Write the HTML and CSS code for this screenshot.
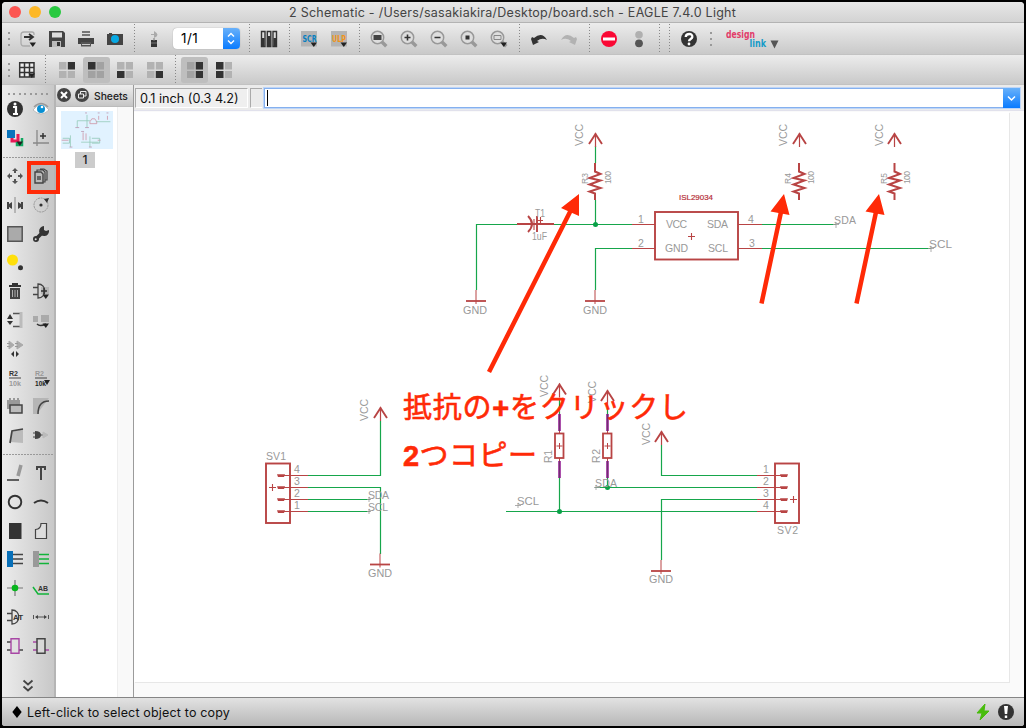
FILE: index.html
```html
<!DOCTYPE html>
<html lang="ja">
<head>
<meta charset="utf-8">
<title>2 Schematic - EAGLE 7.4.0 Light</title>
<link rel="stylesheet" href="styles.css">
</head>
<body>
<svg class="defs" aria-hidden="true">
  <defs>
    <g id="lens"><path d="M3 3 7.300 7.300" stroke="#999" stroke-width="3.400"/><circle cx="-1.500" cy="-1.500" r="6.200" fill="#dedede" stroke="#999" stroke-width="1.500"/></g>
    <path id="drop" d="M1.500 3.500h6.500L4.800 8z" fill="#222"/>
    <g id="supply" fill="none" stroke="#b84444"><path d="M0 0V14" stroke-width="1.200"/><path d="M-6.500 11 0 1 6.500 11" stroke-width="1.900"/></g>
    <g id="ground" stroke="#b84444"><path d="M0-10V4" stroke-width="1"/><path d="M-10 1H10" stroke-width="1.800"/></g>
    <path id="zigzag" d="M0 0V8.500L5.500 11-5.500 15 5.500 17.500-5.500 21.500 5.500 25-5.500 28.500 0 30.500V37" fill="none" stroke="#b84444" stroke-width="2"/>
    <g id="pad"><path d="M-4-1.300H4L3 1.500H-3z" fill="#b84444"/></g>
    <g id="resistor"><path d="M0 0V17M0 47V64" stroke="#952395" stroke-width="2.600"/><path d="M0 0V17M0 47V64" stroke="#673268" stroke-width=".8"/><path d="M0 17V20M0 44V47" stroke="#b84444"/><rect x="-4.500" y="19.500" width="8.500" height="24.500" fill="#fff" stroke="#b84444" stroke-width="1.800"/><path d="M-3 32H3M0 29V35" stroke="#b84444"/></g>
    <g id="gate" fill="none" stroke="#444" stroke-width="1.300"><path d="M-8-3.500h5M-8 3.500h5M-3-7v14C6 7 6-7-3-7z"/></g>
  </defs>
</svg>
<div class="window">
  <header class="titlebar">
    <div class="lights"><i class="close"></i><i class="min"></i><i class="max"></i></div>
    <h1>2 Schematic - /Users/sasakiakira/Desktop/board.sch - EAGLE 7.4.0 Light</h1>
  </header>

  <nav class="toolbar main-tools">
    <span class="grip"></span>
    <div class="group file">
      <b><svg viewBox="-8 -8 16 16"><path d="M6-4V-5Q6-7 4-7H-4Q-7-7-7-4V4Q-7 7-4 7H2" fill="none" stroke="#aaa" stroke-width="1.300"/><path d="M-4-2H4M1-5 5-2 1 1" fill="none" stroke="#333" stroke-width="1.800"/><use href="#drop"/></svg></b>
      <b><svg viewBox="-8 -8 16 16"><path d="M-8-8H6L8-6V8H-8z" fill="#444"/><path d="M-5-6.500h10v5h-10z" fill="#ddd"/><path d="M-5 2h9v6h-9z" fill="#bbb"/><path d="M0 3h3v4H0z" fill="#333"/></svg></b>
      <b><svg viewBox="-8 -8 16 16"><path d="M-4-7h8M-4-4h8" stroke="#777" stroke-width="2"/><path d="M-8-1H8V5H5V3H-5V5H-8z" fill="#444"/><path d="M-5 3H5V7.500H-5z" fill="#555"/><path d="M-4 5.500h8" stroke="#ccc"/></svg></b>
      <b><svg viewBox="-8 -8 16 16"><path d="M-8-5H-6V-6H-3V-5H8V6H-8z" fill="#444"/><circle r="4" fill="#08a9e4"/></svg></b>
    </div>
    <span class="sep"></span>
    <b><svg viewBox="-8 -8 16 16"><path d="M-3-5H0V-8Q7-4 0-1V-4H-3z" fill="#aaa"/><path d="M-3 1H3V8H-3z" fill="#333"/><path d="M0-1V2M-3 4H3" stroke="#777"/></svg></b>
    <div class="combo"><span>1/1</span><i><svg viewBox="0 0 16 21"><path d="M5 8.500 8 5.500 11 8.500M5 12.500 8 15.500 11 12.500" fill="none" stroke="#fff" stroke-width="1.400"/></svg></i></div>
    <span class="sep"></span>
    <b><svg viewBox="-8 -8 16 16"><g fill="#ddd" stroke="#333" stroke-width="1.400"><path d="M-7.500-7.500h3.500v15h-3.500zM-1.700-7.500h3.500v15h-3.500zM4-7.500h3.500v15H4z"/><path d="M-6-1V7M0-3V7M6-1V7" stroke-width="3"/></g></svg></b>
    <span class="sep"></span>
    <b><svg viewBox="-8 -8 16 16"><path d="M-8-8H8V7.500H-8z" fill="#b4b4b4"/><text class="tag" x="-6.500" y="2.500" fill="#087fc0" textLength="14" lengthAdjust="spacingAndGlyphs">SCR</text><use href="#drop"/></svg></b>
    <b><svg viewBox="-8 -8 16 16"><path d="M-8-8H8V7.500H-8z" fill="#b4b4b4"/><text class="tag" x="-7" y="2.500" fill="#f29418" textLength="14" lengthAdjust="spacingAndGlyphs">ULP</text><use href="#drop"/></svg></b>
    <span class="sep"></span>
    <b><svg viewBox="-8 -8 16 16"><use href="#lens"/><path d="M-5.500-4H2.500V1H-5.500z" fill="#444"/></svg></b>
    <b><svg viewBox="-8 -8 16 16"><use href="#lens"/><path d="M-4.500-1.500h6M-1.500-4.500v6" stroke="#333" stroke-width="1.600"/></svg></b>
    <b><svg viewBox="-8 -8 16 16"><use href="#lens"/><path d="M-4.500-1.500h6" stroke="#333" stroke-width="1.600"/></svg></b>
    <b><svg viewBox="-8 -8 16 16"><use href="#lens"/><path d="M-3.500-3.500h4v4h-4z" fill="#333"/></svg></b>
    <b><svg viewBox="-8 -8 16 16"><use href="#lens"/><path d="M-5-3.500h7v4h-7z" fill="#ddd" stroke="#888"/><use href="#drop"/></svg></b>
    <span class="sep"></span>
    <b><svg viewBox="-8 -8 16 16"><path d="M-8 0-6 6 0 3-2 2Q3-2 8 1 3-8-5-1L-7-2z" fill="#333"/></svg></b>
    <b><svg viewBox="-8 -8 16 16"><path d="M8 0 6 6 0 3 2 2Q-3-2-8 1-3-8 5-1L7-2z" fill="#b2b2b2"/></svg></b>
    <span class="sep"></span>
    <b><svg viewBox="-8 -8 16 16"><circle r="8" fill="#fa0834"/><path d="M-6 0H6" stroke="#fff" stroke-width="3"/></svg></b>
    <b><svg viewBox="-8 -8 16 16"><circle cy="-4.300" r="3.800" fill="#b0b0b0"/><circle cy="4.300" r="3.900" fill="#555"/></svg></b>
    <span class="sep"></span><span class="sep"></span>
    <b><svg viewBox="-8 -8 16 16"><circle r="8" fill="#333"/><path d="M-3.300-2C-3-6 4-6 3.300-2 3 0 0 0 0 2.300" fill="none" stroke="#fff" stroke-width="2.300"/><circle cy="5" r="1.400" fill="#fff"/></svg></b>
    <span class="grip"></span>
    <svg class="designlink" viewBox="0 0 54 26"><text x="0" y="12" fill="#e23c6a" textLength="29" lengthAdjust="spacingAndGlyphs">design</text><text x="23.500" y="20.500" fill="#159bc8" textLength="16.500" lengthAdjust="spacingAndGlyphs">link</text><path d="M44.500 14.500h8L48.500 22.500z" fill="#555"/></svg>
  </nav>

  <nav class="toolbar layout-tools">
    <span class="grip"></span>
    <b class="first"><svg viewBox="-8 -8 16 16"><path d="M-7.300-7.300H7V7H-7.300zM-2.500-7V7M2.500-7V7M-7-2.500H7M-7 2.500H7" fill="#eee" stroke="#333" stroke-width="1.500"/><use href="#drop"/></svg></b>
    <span class="sep"></span>
    <b><svg viewBox="-8 -8 16 16"><path d="M-8-8h7.500v7.500H-8zM-8 1h7.500v7H-8zM.8 1H8v7H.8z" fill="#b2b2b2"/><path d="M.8-8H8v7.500H.8z" fill="#333"/></svg></b>
    <b class="on"><svg viewBox="-8 -8 16 16"><path d="M.8-8H8v7.500H.8zM-8 1h7.500v7H-8zM.8 1H8v7H.8z" fill="#a2a2a2"/><path d="M-8-8h7.500v7.500H-8z" fill="#333"/></svg></b>
    <b><svg viewBox="-8 -8 16 16"><path d="M-8-8h7.500v7.500H-8zM.8-8H8v7.500H.8zM.8 1H8v7H.8z" fill="#b2b2b2"/><path d="M-8 1h7.500v7H-8z" fill="#333"/></svg></b>
    <b><svg viewBox="-8 -8 16 16"><path d="M-8-8h7.500v7.500H-8zM.8-8H8v7.500H.8zM-8 1h7.500v7H-8z" fill="#b2b2b2"/><path d="M.8 1H8v7H.8z" fill="#333"/></svg></b>
    <span class="sep"></span>
    <b class="on"><svg viewBox="-8 -8 16 16"><path d="M-8-8h7.500v7.500H-8zM-8 1h7.500v7H-8z" fill="#a2a2a2"/><path d="M.8-8H8v7.500H.8zM.8 1H8v7H.8z" fill="#333"/></svg></b>
    <b><svg viewBox="-8 -8 16 16"><path d="M.8-8H8v7.500H.8zM.8 1H8v7H.8z" fill="#b2b2b2"/><path d="M-8-8h7.500v7.500H-8zM-8 1h7.500v7H-8z" fill="#333"/></svg></b>
  </nav>

  <main class="work">
    <aside class="palette">
      <span class="dots"></span>
      <div class="tools">
        <b><svg viewBox="-8 -8 16 16"><circle r="8" fill="#333"/><path d="M-2-2H1V4M-2 5H3" fill="none" stroke="#fff" stroke-width="2.200"/><circle cx="0" cy="-5" r="1.500" fill="#fff"/></svg></b>
        <b><svg viewBox="-8 -8 16 16"><path d="M-8 1Q0-10 8 1 0 9-8 1z" fill="#fff" stroke="#bbb"/><circle cx="0" cy="0" r="4" fill="#078fd3"/><circle cx="1" cy="-2" r="1.300" fill="#fff"/><path d="M-7-2Q0-9 7-2" fill="none" stroke="#999" stroke-width="1.500"/></svg></b>
        <b><svg viewBox="-8 -8 16 16"><path d="M-8-8H0V0H-8z" fill="#0874bd"/><path d="M-3 0V3H3V-4" fill="none" stroke="#e61b57" stroke-width="3"/><path d="M2 4V7H7V0" fill="none" stroke="#12a860" stroke-width="2.500"/><use href="#drop"/></svg></b>
        <b><svg viewBox="-8 -8 16 16"><path d="M-4-8V8M-8 5H8" stroke="#888" stroke-width="1.300"/><path d="M-1-2H5M2-5V1" stroke="#333" stroke-width="1.500"/></svg></b>
      </div>
      <span class="rule"></span>
      <div class="tools">
        <b><svg viewBox="-8 -8 16 16"><path d="M0-8 3-5H1V-3H-1V-5H-3zM0 8 3 5H1V3H-1V5H-3zM-8 0-5-3V-1H-3V1H-5V3zM8 0 5-3V-1H3V1H5V3z" fill="#555"/></svg></b>
        <b class="picked"><svg viewBox="-8 -8 16 16"><path d="M-6-4H0L2-2V7H-6z" fill="none" stroke="#444" stroke-width="1.400"/><path d="M-4-4V-6H2L4-4V6H2M-1-7H3L6-5V4H4" fill="none" stroke="#444" stroke-width="1.200"/><path d="M-4 0H0V4H-4z" fill="#666"/></svg></b>
        <b><svg viewBox="-8 -8 16 16"><path d="M0-8V8" stroke="#888"/><path d="M-8-3H-6V-1L-3-3V4L-6 2V4H-8zM8-3H6V-1L3-3V4L6 2V4H8z" fill="#444"/></svg></b>
        <b><svg viewBox="-8 -8 16 16"><circle r="7" fill="none" stroke="#999" stroke-dasharray="2 .7"/><circle r="1.600" fill="#333"/><path d="M3-6 8-7 6-2z" fill="#333"/></svg></b>
        <b><svg viewBox="-8 -8 16 16"><path d="M-7.200-7.200H7.200V7.200H-7.200z" fill="#aaa" stroke="#555" stroke-width="1.500"/></svg></b>
        <b><svg viewBox="-8 -8 16 16"><path d="M-5 5 3-3" stroke="#333" stroke-width="3.500"/><path d="M8-4A5 5 0 1 1 3-8V-4L5-3z" fill="#333"/><circle cx="-5" cy="5" r="3" fill="#333"/><circle cx="-5.300" cy="5.300" r="1" fill="#ddd"/></svg></b>
        <b><svg viewBox="-8 -8 16 16"><circle cx="-2.500" cy="-2" r="5.500" fill="#ffdf0b"/><circle cx="5.500" cy="5.800" r="2.500" fill="#333"/></svg></b><b></b>
        <b><svg viewBox="-8 -8 16 16"><path d="M-6-5H6M-3-7H3" stroke="#333" stroke-width="1.800"/><path d="M-5-3H5V8H-5z" fill="#444"/><path d="M-2.500-1V6M0-1V6M2.500-1V6" stroke="#ccc" stroke-width=".8"/></svg></b>
        <b><svg viewBox="-8 -8 16 16"><path d="M0-4H8V3H0z" fill="#b5b5b5"/><use href="#gate"/><path d="M0 0H6M3-3V3" stroke="#333" stroke-width="1.500"/><use href="#drop"/></svg></b>
        <b><svg viewBox="-8 -8 16 16"><path d="M-5-6-2-1H-8zM-5 5-2 1H-8z" fill="#333"/><path d="M-2-6.500H5M-2 6.500H5" stroke="#555" stroke-width="1.500"/><path d="M6-8V8" stroke="#bbb" stroke-width="3"/></svg></b>
        <b><svg viewBox="-8 -8 16 16"><path d="M-8-4h5v6h-5zM0-5H8V2H0z" fill="#aaa"/><path d="M-4 4Q-1 7 5 4" fill="none" stroke="#333" stroke-width="1.500"/><use href="#drop"/></svg></b>
        <b><svg viewBox="-8 -8 16 16"><path d="M-6-8-1-4-6 0zM2-8 8-4 2 0z" fill="#aaa" stroke="#aaa"/><path d="M-8-5.500H-5M-8-2.500H-5M0-5.500H3M0-2.500H3" stroke="#999"/><path d="M-1 2-4 5-1 8zM1 2 4 5 1 8z" fill="#333"/></svg></b><b></b>
        <b><svg viewBox="-8 -8 16 16"><text class="tiny" x="-6" y="-2" fill="#333" textLength="9" lengthAdjust="spacingAndGlyphs">R2</text><path d="M-6 0H6" stroke="#444"/><text class="tiny" x="-6" y="8" fill="#999" textLength="12" lengthAdjust="spacingAndGlyphs">10k</text></svg></b>
        <b><svg viewBox="-8 -8 16 16"><text class="tiny" x="-6" y="-2" fill="#999" textLength="9" lengthAdjust="spacingAndGlyphs">R2</text><path d="M-6 0H6" stroke="#444"/><text class="tiny" x="-6" y="8" fill="#222" textLength="11" lengthAdjust="spacingAndGlyphs">10k</text><path d="M3 2H9L6 7z" fill="#222"/></svg></b>
        <b><svg viewBox="-8 -8 16 16"><path d="M-8-6H5V3H-8z" fill="#999"/><path d="M-6-7H5" stroke="#999" stroke-width="2" stroke-dasharray="2"/><path d="M-5-1H7V7H-5z" fill="#bbb" stroke="#444" stroke-width="1.500"/></svg></b>
        <b><svg viewBox="-8 -8 16 16"><path d="M-8-8H8L-4 8H-8z" fill="#b5b5b5"/><path d="M-3 8Q-3-5 8-5" fill="none" stroke="#444" stroke-width="1.500"/></svg></b>
        <b><svg viewBox="-8 -8 16 16"><path d="M-3-3 8-6V8L-5 7z" fill="#bbb"/><path d="M-5 8-3-4 8-6" fill="none" stroke="#444" stroke-width="1.700"/></svg></b>
        <b><svg viewBox="-8 -8 16 16"><path d="M-6-4Q0-4 0 0 0 4-6 4z" fill="#444"/><path d="M-8-2H-5M-8 2H-5M0 0H2" stroke="#444"/><path d="M2-3 7 0 2 3z" fill="#bbb" stroke="#bbb"/></svg></b>
      </div>
      <span class="rule"></span>
      <div class="tools">
        <b><svg viewBox="-8 -8 16 16"><path d="M-8 7H4" stroke="#333" stroke-width="1.500"/><path d="M6-8 3 3" stroke="#999" stroke-width="3.500"/></svg></b>
        <b><svg viewBox="-8 -8 16 16"><path d="M-4-3V-6H4V-3M0-6V7" fill="none" stroke="#444" stroke-width="2"/></svg></b>
        <b><svg viewBox="-8 -8 16 16"><circle r="6.300" fill="none" stroke="#333" stroke-width="1.900"/></svg></b>
        <b><svg viewBox="-8 -8 16 16"><path d="M-7 1Q0-4 7 1" fill="none" stroke="#333" stroke-width="2"/></svg></b>
        <b><svg viewBox="-8 -8 16 16"><path d="M-6-8H6.500V8H-6z" fill="#333"/></svg></b>
        <b><svg viewBox="-8 -8 16 16"><path d="M-5.500 7.500V-1.500Q0-2 0-7.500H5.500V7.500z" fill="#ddd" stroke="#444" stroke-width="1.200"/></svg></b>
        <b><svg viewBox="-8 -8 16 16"><path d="M-8-8H-2V8H-8z" fill="#0870b9"/><path d="M-2-4.500H8M-2 0H8M-2 4.500H8" stroke="#444" stroke-width="1.300"/></svg></b>
        <b><svg viewBox="-8 -8 16 16"><path d="M-8-8H-2V8H-8z" fill="#999"/><path d="M-2-4.500H8M-2 0H8M-2 4.500H8" stroke="#12b43a" stroke-width="1.400"/></svg></b>
        <b><svg viewBox="-8 -8 16 16"><path d="M-8 0H8M0-8V8" stroke="#777" stroke-width="1.200"/><circle r="3.300" fill="#08b51d"/></svg></b>
        <b><svg viewBox="-8 -8 16 16"><path d="M-8-1-3 6H8" fill="none" stroke="#12b43a" stroke-width="1.500"/><text class="tiny" x="-3" y="3" fill="#333" textLength="10" lengthAdjust="spacingAndGlyphs">AB</text></svg></b>
        <b><svg viewBox="-8 -8 16 16"><use href="#gate"/><text class="tiny" x="-2" y="3" fill="#333" textLength="10" lengthAdjust="spacingAndGlyphs">AT</text></svg></b>
        <b><svg viewBox="-8 -8 16 16"><path d="M-7.500-2V2M7.500-2V2M-5 0H5" stroke="#555"/><path d="M-6 0-3-2V2zM6 0 3-2V2z" fill="#444"/></svg></b>
        <b><svg viewBox="-8 -8 16 16"><path d="M-8-4H-4M-8 4H-4M4 4H8" stroke="#444" stroke-width="1.500"/><path d="M-4-7.300H4V7.300H-4z" fill="#e1e1e1" stroke="#a847a5" stroke-width="1.400"/></svg></b>
        <b><svg viewBox="-8 -8 16 16"><path d="M-8-4H-4M-8 4H-4M4 4H8" stroke="#a847a5" stroke-width="1.500"/><path d="M-4-7.300H4V7.300H-4z" fill="#d8d8d8" stroke="#444" stroke-width="1.500"/></svg></b>
      </div>
      <svg class="more" viewBox="0 0 12 14"><path d="M1.500 1.500 6 5.500 10.500 1.500M1.500 7.500 6 11.500 10.500 7.500" fill="none" stroke="#444" stroke-width="1.800"/></svg>
    </aside>

    <section class="sheets">
      <header>
        <svg viewBox="0 0 14 14"><circle cx="7" cy="7" r="7" fill="#444"/><path d="M4 4 10 10M10 4 4 10" stroke="#fff" stroke-width="2"/></svg>
        <svg viewBox="0 0 14 14"><circle cx="7" cy="7" r="7" fill="#444"/><path d="M5.500 6V3.500H11V8H9M3.500 6H8.500V10H3.500z" fill="none" stroke="#eee"/></svg>
        <span>Sheets</span>
      </header>
      <div class="sheet-body">
        <div class="sheet-list">
          <svg class="thumb" viewBox="0 0 52 39"><g fill="none" stroke-width=".8"><path d="M16 17V10H29M35 11H50M26 17V4M9 25V37M20 32H38M29 26V37" stroke="#91c9b7"/><path d="M29 11 31 8H34L36 11V13H29zM0 30H7M37 30H40M22 22V30M25 23V30M38 5V9M47 5V9" stroke="#cd91a2"/><path d="M1 28H8V33H1M31 28H39V33H31" stroke="#8ec6b5"/><path d="M14 17H18M24 17H28M8 37H11M28 37H31M24 2H26M37 2H39M46 2H48M20 21H23" stroke="#b994ae"/></g></svg>
          <span class="num">1</span>
        </div>
      </div>
    </section>

    <section class="editor">
      <div class="command">
        <span class="coords">0.1 inch (0.3 4.2)</span>
        <span class="gap"></span>
        <div class="field"><span class="caret"></span><i><svg viewBox="0 0 17 20"><path d="M5 8.500 8.500 12 12 8.500" fill="none" stroke="#fff" stroke-width="1.500"/></svg></i></div>
      </div>
      <div class="canvas-area">
        <svg class="canvas" viewBox="134 112 875 570">
          <g class="net">
            <path d="M517 224.500H476.500V290M553 224.500H632M595.500 146V163M595.500 200V224M632 248.500H595.500V290M762 224.500H836M762 248.500H931"/>
            <path d="M308 475.500H380.500V421M308 487.500H380.500V554M308 499.500H370M308 511.500H370"/>
            <path d="M559.500 398V414M559.500 477V511M607.500 404V414M607.500 477V487M595 487.500H757M506 511.500H757M661.500 445V475.500H757M757 499.500H661.500V560"/>
            <g class="joint"><circle cx="595.500" cy="224.500" r="2.500"/><circle cx="607.500" cy="487.500" r="2.500"/><circle cx="559.500" cy="511.500" r="2.500"/></g>
          </g>
          <use href="#supply" x="595.500" y="133"/><use href="#supply" x="799.500" y="133"/><use href="#supply" x="894.500" y="133"/>
          <use href="#supply" x="380.500" y="407"/><use href="#supply" x="559.500" y="383.500"/><use href="#supply" x="607.500" y="390"/><use href="#supply" x="661.500" y="431"/>
          <use href="#ground" x="476" y="300"/><use href="#ground" x="595" y="300"/><use href="#ground" x="380" y="563.500"/><use href="#ground" x="661" y="570"/>
          <use href="#zigzag" x="595" y="163"/><use href="#zigzag" x="799" y="163"/><use href="#zigzag" x="894.500" y="163"/>
          <use href="#resistor" x="559.500" y="414"/><use href="#resistor" x="607.500" y="414"/>
          <g class="part">
            <path class="thin" d="M632 224.500H655M632 248.500H655M738 224.500H762M738 248.500H762M688 236.500H695M691.500 233V240"/>
            <rect x="655" y="212" width="83" height="47.500"/>
            <path d="M517 224H554M537 216V232M528 216Q536 224 528 232"/><path class="thin" d="M537 220.500H543M540.500 217V223M534 219V230"/>
            <rect x="266" y="463.500" width="24" height="59.500"/><rect x="775" y="463.500" width="24" height="59.500"/>
            <path class="thin" d="M280 475.500H308M280 487.500H308M280 499.500H308M280 511.500H308M269 487.500H276M272.500 484V491M757 475.500H785M757 487.500H785M757 499.500H785M757 511.500H785M790 499.500H797M793.500 496V503"/>
          </g>
          <use href="#pad" x="281" y="475.500"/><use href="#pad" x="281" y="487.500"/><use href="#pad" x="281" y="499.500"/><use href="#pad" x="281" y="511.500"/>
          <use href="#pad" x="784" y="475.500"/><use href="#pad" x="784" y="487.500"/><use href="#pad" x="784" y="499.500"/><use href="#pad" x="784" y="511.500"/>
          <path class="origin" d="M833 224.500H839M836 222V228M928 248.500H934M931 246V252M367 499.500H371M369 497V502M367 511.500H371M369 509V514M594 487.500H600M596 485V490M515 505.500H521M518 503V508"/>
          <g class="label">
            <text x="463" y="314" textLength="24" lengthAdjust="spacingAndGlyphs">GND</text><text x="583" y="314" textLength="24" lengthAdjust="spacingAndGlyphs">GND</text><text x="368" y="577" textLength="24" lengthAdjust="spacingAndGlyphs">GND</text><text x="649" y="583" textLength="24" lengthAdjust="spacingAndGlyphs">GND</text>
            <text x="666" y="228" textLength="21">VCC</text><text x="707" y="228" textLength="21">SDA</text><text x="665" y="252" textLength="23">GND</text><text x="708" y="252" textLength="20">SCL</text>
            <text x="834" y="224" textLength="22">SDA</text><text x="929" y="248" textLength="23" lengthAdjust="spacingAndGlyphs">SCL</text>
            <text x="368" y="499" textLength="21">SDA</text><text x="368" y="511" textLength="20">SCL</text><text x="595" y="487" textLength="22">SDA</text><text x="517" y="505" textLength="22" lengthAdjust="spacingAndGlyphs">SCL</text>
            <text x="266" y="459.500" textLength="20">SV1</text><text x="777" y="534" textLength="21">SV2</text><text x="535" y="217" textLength="10" lengthAdjust="spacingAndGlyphs">T1</text><text x="532" y="240" textLength="15" lengthAdjust="spacingAndGlyphs">1uF</text>
            <text x="638" y="223">1</text><text x="638" y="247">2</text><text x="748" y="223">4</text><text x="749" y="247">3</text>
            <text x="294" y="473">4</text><text x="294" y="485">3</text><text x="294" y="497">2</text><text x="294" y="509">1</text>
            <text x="763" y="473">1</text><text x="763" y="485">2</text><text x="763" y="497">3</text><text x="763" y="509">4</text>
            <text transform="translate(583 146) rotate(-90)" textLength="22">VCC</text><text transform="translate(787 146) rotate(-90)" textLength="22">VCC</text><text transform="translate(883 146) rotate(-90)" textLength="22">VCC</text>
            <text transform="translate(368 421) rotate(-90)" textLength="22">VCC</text><text transform="translate(547.500 397) rotate(-90)" textLength="22">VCC</text><text transform="translate(595.500 403) rotate(-90)" textLength="22">VCC</text><text transform="translate(649.500 445) rotate(-90)" textLength="22">VCC</text>
            <text transform="translate(552 463) rotate(-90)" textLength="13">R1</text><text transform="translate(600 463) rotate(-90)" textLength="14">R2</text>
            <g class="small"><text transform="translate(588 184) rotate(-90)" textLength="11">R3</text><text transform="translate(611 184) rotate(-90)" textLength="13">100</text><text transform="translate(791 184) rotate(-90)" textLength="11">R4</text><text transform="translate(814 184) rotate(-90)" textLength="13">100</text><text transform="translate(887 184) rotate(-90)" textLength="11">R5</text><text transform="translate(910 184) rotate(-90)" textLength="13">100</text></g>
            <text class="chip" x="679" y="200" textLength="34" lengthAdjust="spacingAndGlyphs">ISL29034</text>
          </g>
          <g class="note">
            <path d="M489 372 572 208M761.500 303.500 781 212M856.500 303.500 876 212"/>
            <path class="head" d="M579 194 561 208 579 216zM784 194 770.500 211.500 789.500 215zM879 194 865.500 211.500 884.500 215z"/>
            <text x="403" y="418" textLength="285">抵抗の<tspan class="latin">+</tspan>をクリックし</text>
            <text x="403" y="466" textLength="134"><tspan class="latin">2</tspan>つコピー</text>
          </g>
        </svg>
      </div>
    </section>
  </main>

  <footer class="status">
    <svg viewBox="0 0 10 12"><path d="M5 0 9.700 6 5 12 .3 6z"/></svg>
    <p>Left-click to select object to copy</p>
    <svg class="bolt" viewBox="0 0 14 16"><path d="M9 0 1 9H6L4 16 13 7H8z" fill="#48bc0c" stroke="#48bc0c"/></svg>
    <svg class="alert" viewBox="0 0 16 16"><circle cx="8" cy="8" r="8" fill="#333"/><path d="M6 2H10L9.200 10H6.800zM6.800 11.500H9.200V14H6.800z" fill="#fff"/></svg>
  </footer>
</div>
</body>
</html>
```
FILE: styles.css
```css
*, *::before, *::after { box-sizing: border-box; }
body { margin: 0; padding: 2px; width: 1026px; height: 728px; overflow: hidden; background: #000; font: 12px Inter, "Noto Sans CJK JP", sans-serif; color: #222; }
.defs { position: absolute; width: 0; height: 0; }
.window { display: flex; flex-direction: column; width: 1022px; height: 724px; overflow: hidden; border-radius: 4px 4px 3px 3px; background: #ececec; }
.titlebar { display: flex; align-items: center; height: 21px; background: linear-gradient(#e7e7e7, #d3d3d3); border-bottom: 1px solid #b3b3b3; }
.titlebar h1 { margin: 0 0 0 226px; font-size: 12.500px; font-weight: 400; color: #444; letter-spacing: .26px; white-space: nowrap; }
.lights { display: flex; gap: 8px; width: 61px; padding-left: 7px; }
.lights i { flex: none; width: 12px; height: 12px; border-radius: 50%; }
.close { background: #fc5652; }
.min { background: #fdb827; }
.max { background: #29c941; }
.toolbar { display: flex; align-items: center; background: linear-gradient(#ececec, #c9c9c9); border-bottom: 1px solid #c2c2c2; }
.main-tools { height: 32px; }
.layout-tools { height: 30px; }
.toolbar b { flex: none; display: flex; align-items: center; justify-content: center; width: 30px; height: 26px; }
.toolbar b svg { width: 16px; height: 16px; overflow: visible; }
.group { display: flex; }
.group b { width: 29px; }
.grip { flex: none; width: 11px; height: 16px; padding-left: 6px; }
.main-tools .grip:first-child { width: 11px; }
.grip::before { content: ""; display: block; width: 2px; height: 14px; margin-top: 1px; background: repeating-linear-gradient(#999 0 2px, transparent 2px 6px); }
.sep { flex: none; width: 10px; height: 29px; padding-left: 5px; }
.sep::before { content: ""; display: block; width: 1px; height: 100%; background: repeating-linear-gradient(#888 0 1px, transparent 1px 3px); }
.combo { display: flex; flex: none; width: 67px; height: 21px; margin: 0 4px 0 4px; background: #fff; border-radius: 4px; box-shadow: 0 0 1px #888; overflow: hidden; font-size: 13.500px; letter-spacing: .5px; color: #000; }
.combo span { flex: 1; padding: 2px 0 0 8px; line-height: 16px; }
.combo i { width: 17px; background: linear-gradient(#69b1fa, #097bff); }
.combo svg { width: 16px; height: 21px; display: block; }
.tag { font: bold 8.500px "DejaVu Sans", sans-serif; }
.designlink { width: 54px; height: 26px; margin-left: 11px; }
.designlink text { font: bold 11px "DejaVu Sans Condensed", "DejaVu Sans", sans-serif; }
.layout-tools .first { margin-left: -1px; }
.layout-tools b { width: 29.750px; }
.layout-tools .first + .sep { margin-right: 2px; margin-left: -2px; }
.layout-tools .on { width: 27px; margin: 0 1px; background: #bebebe; border-radius: 3px; }
.work { display: flex; height: 612px; }
.palette { display: flex; flex-direction: column; align-items: center; width: 54px; background: linear-gradient(90deg, #ececec, #c8c8c8); border-right: 2px solid #b5b5b5; }
.dots { flex: none; width: 40px; height: 2px; margin: 8px 0 0; background: repeating-linear-gradient(90deg, #999 0 2px, transparent 2px 5.500px); }
.tools { flex: none; display: grid; grid-template-columns: 26px 26px; grid-auto-rows: 28.800px; }
.tools b { display: flex; align-items: center; justify-content: center; position: relative; }
.tools svg { width: 16px; height: 16px; overflow: visible; }
.rule { flex: none; width: 50px; height: 1px; margin: 4px 0; background: repeating-linear-gradient(90deg, #999 0 2px, transparent 2px 3px); }
.picked { background: #bababa; }
.picked::after { content: ""; position: absolute; left: -1px; top: -1px; width: 33px; height: 33px; border: 4px solid #ff2a07; z-index: 2; }
.tiny { font: bold 8px "Liberation Sans", sans-serif; }
.more { width: 12px; height: 14px; margin-top: 19px; }
.sheets { display: flex; flex-direction: column; width: 78px; border-right: 1px solid #9b9b9b; }
.sheets header { display: flex; align-items: center; gap: 4px; height: 22px; padding: 0 0 2px 1px; background: linear-gradient(#eee, #c6c6c6); border-bottom: 1px solid #bbb; font: 500 10.300px Inter, sans-serif; white-space: nowrap; }
.sheets header svg { width: 14px; height: 14px; }
.sheets header span { margin: 2px 0 0 1px; }
.sheet-body { flex: 1; background: #f9f9f9; padding-right: 15px; }
.sheet-list { display: flex; flex-direction: column; align-items: center; height: 100%; padding-top: 4px; background: #fff; border-right: 1px solid #eee; }
.thumb { width: 52px; height: 38px; background: #e1f2ff; }
.num { width: 20px; height: 16px; margin: 3px 3px 0 0; background: #ccc; text-align: center; line-height: 16px; font-weight: 500; }
.editor { display: flex; flex-direction: column; flex: 1; }
.command { display: flex; align-items: center; height: 26px; padding: 0 3px 0 1px; background: #ebebeb; border-bottom: 1px solid #e1e1ec; }
.coords { width: 113px; height: 20px; padding-left: 4px; border: 1px solid #aaa; border-right-color: #fff; border-bottom-color: #fff; background: #efefef; font-size: 12.700px; line-height: 19px; white-space: nowrap; color: #111; }
.gap { width: 12px; height: 20px; margin: 0 0 0 2px; border: 1px solid #aaa; border-bottom-color: #fff; border-right: 0; }
.field { display: flex; align-items: center; flex: 1; height: 22px; margin-left: 1px; border: 2px solid #85b0ee; background: #fff; outline: 1px solid #bdd5f8; outline-offset: -1px; }
.caret { width: 1px; height: 16px; margin-left: 2px; background: #000; }
.field i { width: 17px; height: 20px; margin: 0 -1px 0 auto; background: linear-gradient(#69b1fa, #097bff); }
.field svg { display: block; width: 17px; height: 20px; }
.canvas-area { flex: 1; padding: 1px 15px 15px 0; background: #fafafa; }
.canvas { display: block; width: 875px; height: 570px; background: #fff; box-shadow: 1px 1px 0 #e7e7e7; }
.net { fill: none; stroke: #16a64b; stroke-width: 1.200; }
.joint { fill: #08a047; stroke: none; }
.part { fill: none; stroke: #b84444; stroke-width: 1.900; }
.part .thin { stroke-width: 1.100; }
.origin { stroke: #999; fill: none; stroke-width: .8; }
.label { font: 10.500px "Liberation Sans", sans-serif; fill: #999; }
.small { font-size: 8.500px; }
.label .chip { font-size: 8px; fill: #b6303a; stroke: #b6303a; stroke-width: .2; }
.note { fill: none; stroke: #ff2a07; stroke-width: 4.500; }
.note .head { fill: #ff2a07; stroke: none; }
.note text { font: 400 29px "Noto Sans CJK JP", sans-serif; fill: #ff2a07; stroke: #ff2a07; stroke-width: .6; }
.note .latin { font-family: "Liberation Sans", sans-serif; font-weight: 700; }
.status { display: flex; align-items: center; height: 29px; padding: 0 10px; background: linear-gradient(#e2e2e2, #b7b7b7); border-top: 1px solid #858585; }
.status svg { width: 10px; height: 12px; }
.status p { flex: 1; margin: 0 0 0 5px; font-size: 12.500px; color: #111; letter-spacing: .17px; }
.status .bolt { width: 14px; height: 16px; margin-right: 8px; }
.status .alert { width: 16px; height: 16px; }
```
